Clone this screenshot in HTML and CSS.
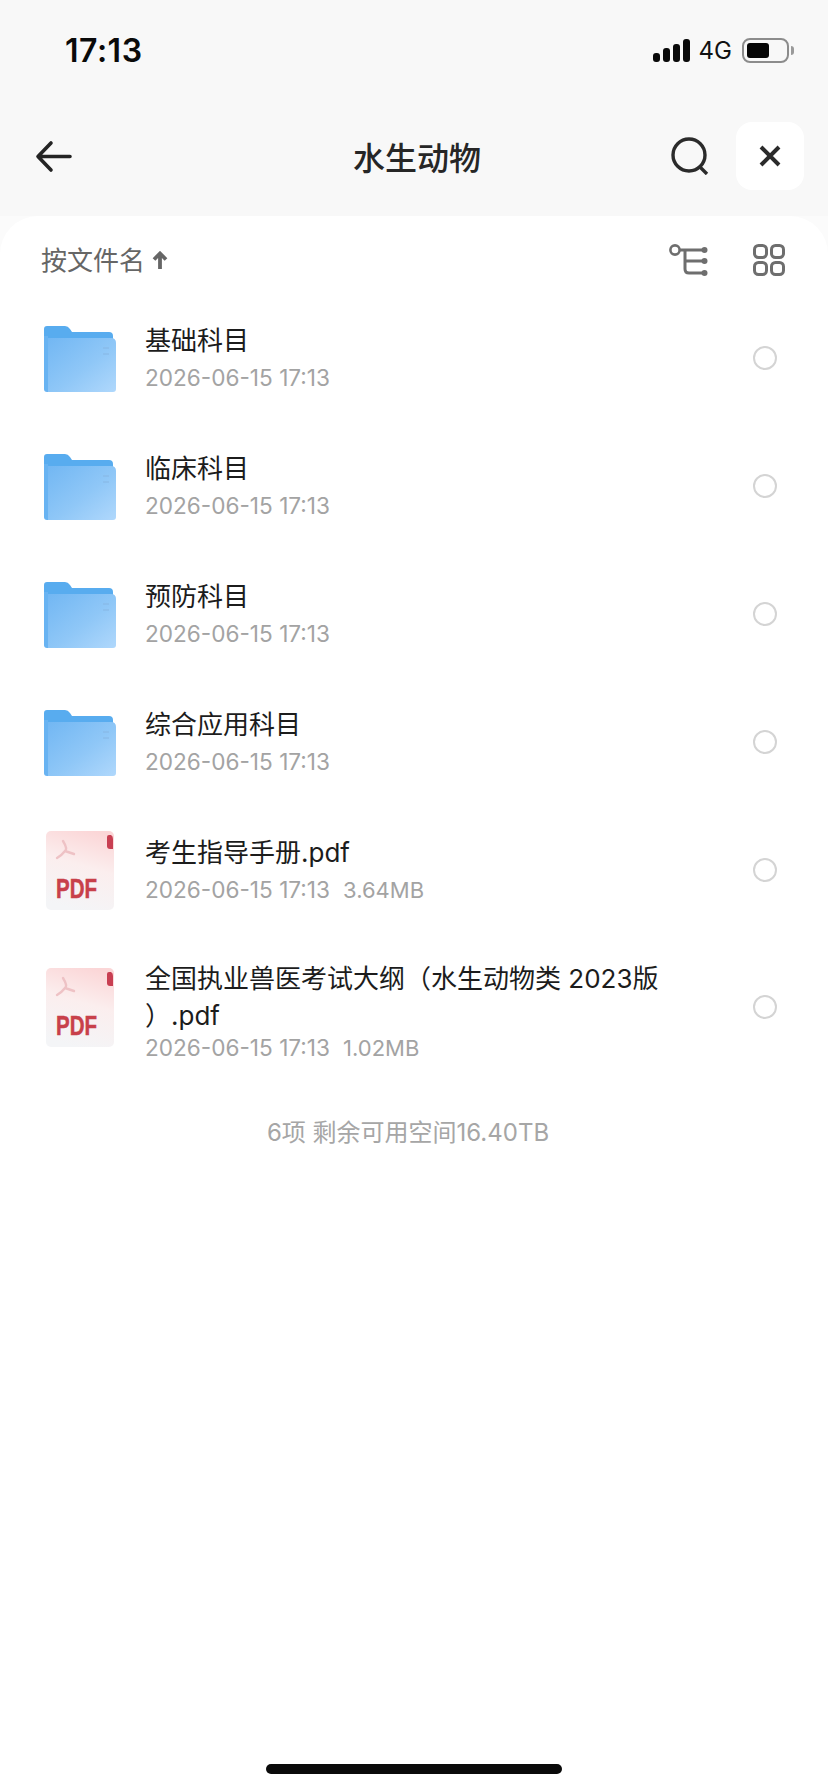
FILE: index.html
```html
<!DOCTYPE html>
<html lang="zh-CN">
<head>
    <meta charset="UTF-8">
    <meta name="viewport" content="width=device-width, initial-scale=1.0">
    <title>水生动物</title>
    <link rel="stylesheet" href="styles.css">
</head>
<body>
    <svg class="defs" width="0" height="0">
        <defs>
            <linearGradient id="folderFront" x1="0" y1="0" x2="1" y2="1">
                <stop offset="0" stop-color="#72b7f3"/>
                <stop offset="0.55" stop-color="#8fc7f7"/>
                <stop offset="1" stop-color="#b0d8fc"/>
            </linearGradient>
            <linearGradient id="pdfPaper" x1="0.7" y1="0" x2="0.45" y2="1">
                <stop offset="0" stop-color="#fbd6d7"/>
                <stop offset="0.45" stop-color="#fbeeee"/>
                <stop offset="1" stop-color="#f4f5f7"/>
            </linearGradient>
            <symbol id="folder" viewBox="0 0 72 66">
                <path d="M3 0H21Q24 0 26 3L28 6H65Q69 6 69 10V16H0V3Q0 0 3 0Z" fill="#58acef"/>
                <path d="M0 10H4V66H3Q0 66 0 63Z" fill="#68b3f2"/>
                <path d="M4 12H67Q72 12 72 17V63Q72 66 69 66H4Z" fill="url(#folderFront)"/>
                <path d="M59 22H65M59 28H65" stroke="#86b6e3" stroke-width="1"/>
            </symbol>
            <symbol id="pdf" viewBox="0 0 68 79">
                <rect width="68" height="79" rx="5" fill="url(#pdfPaper)"/>
                <path d="M61 6Q61 4 63 4H65Q67 5 67 8V18H64Q61 18 61 15Z" fill="#c83f52"/>
                <path d="M17 10Q22 18 19 20Q16 24 11 27M19 20L28 23" fill="none" stroke="#eec2c5" stroke-width="2.4" stroke-linecap="round"/>
                <text class="pdf_label" x="10" y="66.5" textLength="41" lengthAdjust="spacingAndGlyphs">PDF</text>
            </symbol>
        </defs>
    </svg>

    <div class="app">
        <div class="top">
            <div class="status">
                <span class="time">17:13</span>
                <div class="status_right">
                    <div class="signal"><i></i><i></i><i></i><i></i></div>
                    <span class="net">4G</span>
                    <div class="battery"><b></b></div>
                </div>
            </div>

            <div class="nav">
                <svg class="back" width="37" height="33" viewBox="0 0 37 33">
                    <path d="M35 16.5H3M16 3L3 16.5L16 30" fill="none" stroke="#242424" stroke-width="3.6" stroke-linecap="round" stroke-linejoin="round"/>
                </svg>
                <h1>水生动物</h1>
                <svg class="search" width="38" height="38" viewBox="0 0 38 38">
                    <circle cx="18" cy="18" r="16" fill="none" stroke="#2b2b2b" stroke-width="3.4"/>
                    <path d="M28 29L36 37" stroke="#2b2b2b" stroke-width="3.4"/>
                </svg>
                <button class="close">
                    <svg width="22" height="22" viewBox="0 0 22 22">
                        <path d="M2 2L20 20M20 2L2 20" stroke="#2b2b2b" stroke-width="4"/>
                    </svg>
                </button>
            </div>
        </div>

        <div class="sheet">
            <div class="sort">
                <span class="sort_label">按文件名</span>
                <svg class="sort_arrow" width="16" height="18" viewBox="0 0 16 18">
                    <path d="M8 18V3M2 8.5L8 2.5L14 8.5" fill="none" stroke="#666" stroke-width="3.8"/>
                </svg>
                <svg class="tree" width="40" height="34" viewBox="0 0 40 34">
                    <circle cx="7" cy="7" r="4.6" fill="none" stroke="#6e6e6e" stroke-width="2.6"/>
                    <path d="M12 7H37M17 7V26Q17 30 21 30H37M17 18H37" fill="none" stroke="#6e6e6e" stroke-width="3"/>
                    <circle cx="36.5" cy="7" r="3" fill="#6e6e6e"/>
                    <circle cx="36.5" cy="18" r="3" fill="#6e6e6e"/>
                    <circle cx="36.5" cy="30" r="3" fill="#6e6e6e"/>
                </svg>
                <svg class="grid_icon" width="32" height="32" viewBox="0 0 32 32">
                    <g fill="none" stroke="#6e6e6e" stroke-width="3">
                        <rect x="1.5" y="1.5" width="12" height="12" rx="4"/>
                        <rect x="18.5" y="1.5" width="12" height="12" rx="4"/>
                        <rect x="1.5" y="18.5" width="12" height="12" rx="4"/>
                        <rect x="18.5" y="18.5" width="12" height="12" rx="4"/>
                    </g>
                </svg>
            </div>

            <div class="list">
                <div class="row">
                    <svg class="icon folder_icon"><use href="#folder"/></svg>
                    <div class="info">
                        <p class="name">基础科目</p>
                        <p class="date">2026-06-15 17:13</p>
                    </div>
                    <span class="radio"></span>
                </div>
                <div class="row">
                    <svg class="icon folder_icon"><use href="#folder"/></svg>
                    <div class="info">
                        <p class="name">临床科目</p>
                        <p class="date">2026-06-15 17:13</p>
                    </div>
                    <span class="radio"></span>
                </div>
                <div class="row">
                    <svg class="icon folder_icon"><use href="#folder"/></svg>
                    <div class="info">
                        <p class="name">预防科目</p>
                        <p class="date">2026-06-15 17:13</p>
                    </div>
                    <span class="radio"></span>
                </div>
                <div class="row">
                    <svg class="icon folder_icon"><use href="#folder"/></svg>
                    <div class="info">
                        <p class="name">综合应用科目</p>
                        <p class="date">2026-06-15 17:13</p>
                    </div>
                    <span class="radio"></span>
                </div>
                <div class="row">
                    <svg class="icon pdf_icon"><use href="#pdf"/></svg>
                    <div class="info">
                        <p class="name">考生指导手册.pdf</p>
                        <p class="date">2026-06-15 17:13<span class="size">3.64MB</span></p>
                    </div>
                    <span class="radio"></span>
                </div>
                <div class="row tall">
                    <svg class="icon pdf_icon"><use href="#pdf"/></svg>
                    <div class="info">
                        <p class="name">全国执业兽医考试大纲（水生动物类 2023版<br>）.pdf</p>
                        <p class="date">2026-06-15 17:13<span class="size">1.02MB</span></p>
                    </div>
                    <span class="radio"></span>
                </div>
            </div>

            <p class="summary">6项 剩余可用空间16.40TB</p>
            <div class="home_bar"></div>
        </div>
    </div>
</body>
</html>
```

FILE: styles.css
```css
*{
    box-sizing: border-box;
}
html,body{
    margin: 0;
    height: 100%;
}
body{
    background-color: #fbfbfb;
    font-family: Inter, "Noto Sans CJK SC", sans-serif;
}
p,h1{
    margin: 0;
}
.defs{
    position: absolute;
}
.pdf_label{
    font-family: "Liberation Sans", sans-serif;
    font-size: 28px;
    font-weight: 700;
    fill: #c8404a;
    stroke: #c8404a;
    stroke-width: 0.5px;
}
.app{
    height: 1792px;
    display: flex;
    flex-direction: column;
}
.top{
    height: 216px;
    background-color: #f8f8f8;
}

/* status bar */
.status{
    height: 100px;
    padding: 0 39px 0 65px;
    display: flex;
    justify-content: space-between;
    align-items: center;
}
.time{
    font-size: 32px;
    font-weight: 600;
    letter-spacing: 0.5px;
    color: #0a0a0a;
}
.status_right{
    display: flex;
    align-items: center;
}
.signal{
    display: flex;
    align-items: flex-end;
    gap: 3px;
    height: 23px;
}
.signal>i{
    width: 7px;
    background-color: #0a0a0a;
    border-radius: 3px;
}
.signal>i:nth-child(1){ height: 9px; }
.signal>i:nth-child(2){ height: 14px; }
.signal>i:nth-child(3){ height: 18px; }
.signal>i:nth-child(4){ height: 23px; }
.net{
    margin-left: 9px;
    font-size: 24px;
    color: #111;
}
.battery{
    position: relative;
    margin-left: 10px;
    width: 47px;
    height: 25px;
    padding: 3px;
    border: 2px solid #8c8c8c;
    border-radius: 8px;
}
.battery::after{
    content: "";
    position: absolute;
    right: -7px;
    top: 6px;
    width: 3px;
    height: 9px;
    background-color: #9a9a9a;
    border-radius: 0 3px 3px 0;
}
.battery>b{
    display: block;
    width: 22px;
    height: 100%;
    background-color: #050505;
    border-radius: 3px;
}

/* title bar */
.nav{
    position: relative;
    height: 68px;
    margin-top: 22px;
    padding: 0 24px 0 35px;
    display: flex;
    align-items: center;
}
.nav>h1{
    position: absolute;
    left: 3px;
    right: -3px;
    text-align: center;
    font-size: 32px;
    font-weight: 500;
    color: #262626;
}
.search{
    margin-left: auto;
}
.close{
    margin-left: 27px;
    width: 68px;
    height: 68px;
    border: none;
    border-radius: 16px;
    background-color: #fff;
    display: flex;
    align-items: center;
    justify-content: center;
}

/* white sheet */
.sheet{
    flex: 1;
    background-color: #fff;
    border-radius: 38px 38px 0 0;
    display: flex;
    flex-direction: column;
}
.sort{
    height: 78px;
    padding: 10px 43px 0 41px;
    display: flex;
    align-items: center;
}
.sort_label{
    margin-bottom: 4px;
    font-size: 26px;
    color: #666;
}
.sort_arrow{
    margin-left: 7px;
}
.tree{
    margin-left: auto;
}
.grid_icon{
    margin-left: 45px;
}

.row{
    min-height: 128px;
    padding: 0 51px 0 44px;
    display: flex;
    align-items: center;
}
.row.tall{
    min-height: 146px;
}
.icon{
    flex: none;
}
.folder_icon{
    width: 72px;
    height: 66px;
    margin-top: 2px;
    margin-right: 29px;
}
.pdf_icon{
    width: 68px;
    height: 79px;
    margin-left: 2px;
    margin-right: 31px;
}
.info{
    flex: 1;
    padding-top: 2px;
}
.name{
    font-size: 26px;
    line-height: 36px;
    color: #1c1c1c;
}
.date{
    margin-top: 2px;
    font-size: 22.6px;
    line-height: 34px;
    color: #a3a3a3;
}
.row.tall .info{
    padding-top: 10px;
}
.row.tall .name{
    line-height: 37px;
}
.row.tall .date{
    margin-top: -3px;
}
.size{
    margin-left: 13px;
    font-size: 22px;
}
.radio{
    flex: none;
    width: 24px;
    height: 24px;
    border: 2.5px solid #d4d4d4;
    border-radius: 50%;
}
.summary{
    margin-top: 35px;
    padding-right: 12px;
    text-align: center;
    font-size: 24px;
    line-height: 36px;
    color: #a6a6a6;
}
.home_bar{
    margin: auto auto 18px;
    width: 296px;
    height: 10px;
    background-color: #0a0a0a;
    border-radius: 5px;
}
```
